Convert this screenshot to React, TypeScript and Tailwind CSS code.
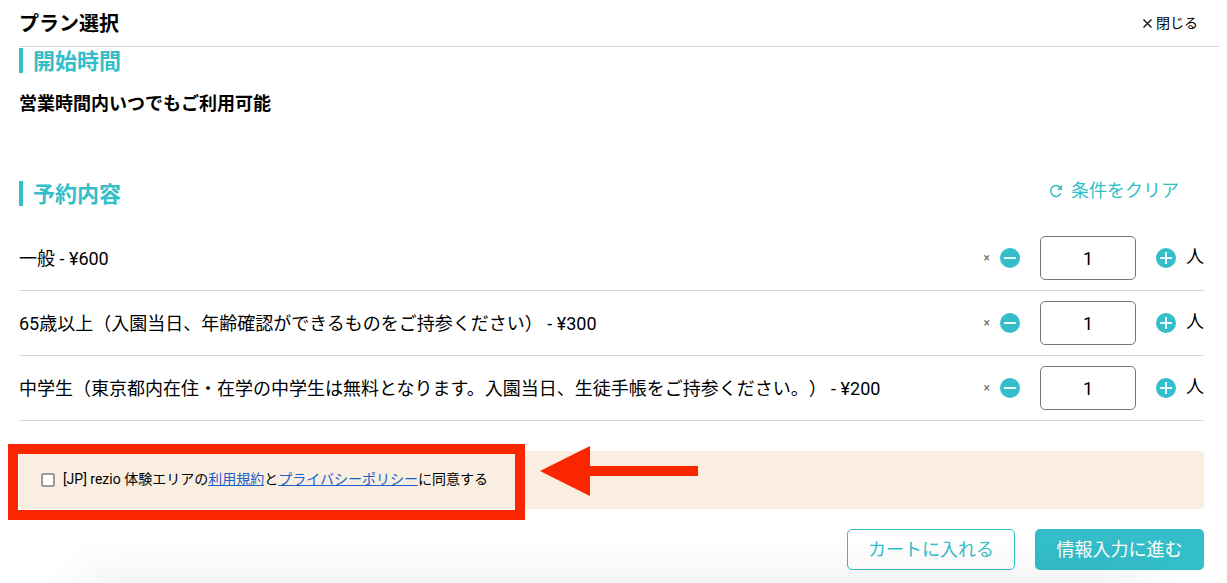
import { useState } from "react";

interface Ticket {
  id: string;
  label: string;
  price: number;
}

const tickets: Ticket[] = [
  { id: "adult", label: "一般", price: 600 },
  { id: "senior", label: "65歳以上（入園当日、年齢確認ができるものをご持参ください）", price: 300 },
  {
    id: "student",
    label: "中学生（東京都内在住・在学の中学生は無料となります。入園当日、生徒手帳をご持参ください。）",
    price: 200,
  },
];

function SectionTitle({ children }: { children: string }) {
  return (
    <h2 className="flex h-[25px] items-center border-l-4 border-[#33bec9] pl-2.5 pt-0.5 text-[22px] font-bold leading-[25px] text-[#33bec9]">
      {children}
    </h2>
  );
}

function CircleIcon({ plus }: { plus?: boolean }) {
  return (
    <svg viewBox="0 0 20 20" className="size-5" aria-hidden="true">
      <circle cx="10" cy="10" r="10" fill="#33bec9" />
      <path d={plus ? "M4 10H16M10 4V16" : "M4 10H16"} stroke="#e9fbfc" strokeWidth="2" />
    </svg>
  );
}

function TicketRow({
  ticket,
  count,
  onChange,
}: {
  ticket: Ticket;
  count: number;
  onChange: (n: number) => void;
}) {
  return (
    <li className="flex items-center border-b border-[#d8d8d8] py-2.5 text-lg">
      <label htmlFor={ticket.id} className="flex-1 pt-0.5">
        {ticket.label} - ¥{ticket.price}
      </label>
      <span className="mr-2.5 text-xs text-[#666]">×</span>
      <button type="button" aria-label="減らす" onClick={() => onChange(Math.max(0, count - 1))}>
        <CircleIcon />
      </button>
      <input
        id={ticket.id}
        type="text"
        inputMode="numeric"
        value={count}
        onChange={(e) => onChange(Number(e.target.value) || 0)}
        className="mx-5 h-11 w-24 rounded-[5px] border border-[#767676] bg-white text-center text-lg"
      />
      <button type="button" aria-label="増やす" onClick={() => onChange(count + 1)}>
        <CircleIcon plus />
      </button>
      <span className="ml-2.5 pb-0.5">人</span>
    </li>
  );
}

export default function App() {
  const [counts, setCounts] = useState<number[]>([1, 1, 1]);
  const [agreed, setAgreed] = useState(false);

  return (
    <div className="relative min-h-screen overflow-hidden bg-white font-['Roboto','Noto_Sans_CJK_JP',sans-serif] text-black [text-spacing-trim:space-all]">
      <header className="ml-[19px] mr-2 flex h-[47px] items-center justify-between border-b border-[#d8d8d8] pr-[21px]">
        <h1 className="pt-0.5 text-xl font-bold">プラン選択</h1>
        <button type="button" className="flex items-center gap-1 text-sm">
          <svg viewBox="0 0 9 9" className="size-[9px]" aria-hidden="true">
            <path d="M0.5 0.5L8.5 8.5M8.5 0.5L0.5 8.5" stroke="#111" strokeWidth="1.4" />
          </svg>
          閉じる
        </button>
      </header>

      <main className="ml-[19px] mr-[23px] pb-[13px] pt-px">
        <SectionTitle>開始時間</SectionTitle>
        <p className="mt-4 pt-px text-lg font-bold leading-7">営業時間内いつでもご利用可能</p>

        <div className="mt-[63px] flex items-start justify-between">
          <SectionTitle>予約内容</SectionTitle>
          <button
            type="button"
            onClick={() => setCounts([0, 0, 0])}
            className="mr-[25px] flex h-5 items-center gap-2 text-lg text-[#33bec9]"
          >
            <svg viewBox="0 0 14 14" className="size-3.5" fill="none" aria-hidden="true">
              <path
                d="M11.9 9.3A5.4 5.4 0 1 1 11 3.3L12 4.4"
                stroke="currentColor"
                strokeWidth="1.5"
              />
              <path d="M13 0.8V5.8H8Z" fill="currentColor" />
            </svg>
            条件をクリア
          </button>
        </div>

        <ul className="mt-5">
          {tickets.map((ticket, i) => (
            <TicketRow
              key={ticket.id}
              ticket={ticket}
              count={counts[i]}
              onChange={(n) => setCounts(counts.map((c, j) => (j === i ? n : c)))}
            />
          ))}
        </ul>

        <div className="relative mt-[30px] flex h-[58px] items-center rounded bg-[#f9eee0] pl-[22px] text-sm">
          <input
            id="agree"
            type="checkbox"
            checked={agreed}
            onChange={(e) => setAgreed(e.target.checked)}
            className="mr-2 size-3.5 appearance-none rounded-xs border-2 border-[#999] bg-white checked:bg-[#33bec9]"
          />
          <label htmlFor="agree" className="pb-0.5">
            [JP] rezio 体験エリアの
            <a href="#terms" className="text-[#1b60c9] underline">利用規約</a>と
            <a href="#privacy" className="text-[#1b60c9] underline">プライバシーポリシー</a>
            に同意する
          </label>
          <div className="pointer-events-none absolute -left-[11px] -top-[7px] h-[76px] w-[517px] border-10 border-[#fa2600]" />
          <svg
            viewBox="0 0 158 50"
            className="pointer-events-none absolute -top-[5px] left-[521px] h-[50px] w-[158px]"
            aria-hidden="true"
          >
            <path d="M0 25L50 0V20H158V30H50V50Z" fill="#fa2600" />
          </svg>
        </div>

        <div className="mt-5 flex justify-end gap-5 text-lg">
          <button
            type="button"
            className="h-[41px] min-w-[168px] rounded-[5px] border border-[#33bec9] bg-white px-5 text-[#33bec9]"
          >
            カートに入れる
          </button>
          <button
            type="button"
            className="h-[41px] min-w-[169px] rounded-[5px] bg-[#33bec9] px-5 text-white"
          >
            情報入力に進む
          </button>
        </div>
      </main>

      <div className="pointer-events-none absolute -bottom-5 left-20 right-20 h-5 rounded-full shadow-[0_0_50px_rgba(0,0,0,0.14)]" />
    </div>
  );
}
